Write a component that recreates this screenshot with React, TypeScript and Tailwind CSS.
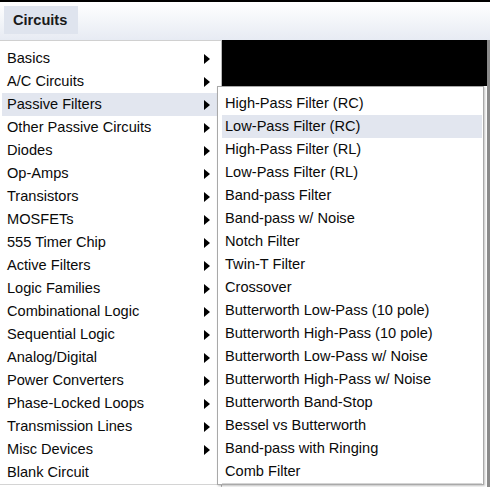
import { ReactNode } from "react";

const mainItems: { label: string; sub: boolean }[] = [
  { label: "Basics", sub: true },
  { label: "A/C Circuits", sub: true },
  { label: "Passive Filters", sub: true },
  { label: "Other Passive Circuits", sub: true },
  { label: "Diodes", sub: true },
  { label: "Op-Amps", sub: true },
  { label: "Transistors", sub: true },
  { label: "MOSFETs", sub: true },
  { label: "555 Timer Chip", sub: true },
  { label: "Active Filters", sub: true },
  { label: "Logic Families", sub: true },
  { label: "Combinational Logic", sub: true },
  { label: "Sequential Logic", sub: true },
  { label: "Analog/Digital", sub: true },
  { label: "Power Converters", sub: true },
  { label: "Phase-Locked Loops", sub: true },
  { label: "Transmission Lines", sub: true },
  { label: "Misc Devices", sub: true },
  { label: "Blank Circuit", sub: false },
];

const filterItems = [
  "High-Pass Filter (RC)",
  "Low-Pass Filter (RC)",
  "High-Pass Filter (RL)",
  "Low-Pass Filter (RL)",
  "Band-pass Filter",
  "Band-pass w/ Noise",
  "Notch Filter",
  "Twin-T Filter",
  "Crossover",
  "Butterworth Low-Pass (10 pole)",
  "Butterworth High-Pass (10 pole)",
  "Butterworth Low-Pass w/ Noise",
  "Butterworth High-Pass w/ Noise",
  "Butterworth Band-Stop",
  "Bessel vs Butterworth",
  "Band-pass with Ringing",
  "Comb Filter",
];

function Arrow() {
  return (
    <svg width="6" height="10" viewBox="0 0 6 10" className="shrink-0">
      <path d="M0 0 L6 5 L0 10 Z" fill="#000" />
    </svg>
  );
}

function Row({ active, children }: { active?: boolean; children: ReactNode }) {
  return (
    <div className={`flex h-[23px] items-center ${active ? "bg-[#e2e6ef]" : ""}`}>
      {children}
    </div>
  );
}

export default function App() {
  return (
    <div
      className="relative h-[487px] w-[490px] overflow-hidden bg-white text-[14.6px] text-[#0a0a0a]"
      style={{ fontFamily: '"Liberation Sans", Arial, sans-serif' }}
    >
      {/* window top edge */}
      <div className="h-[2px] bg-black" />

      {/* menubar */}
      <div className="flex h-[38px] items-start bg-gradient-to-b from-[#ffffff] to-[#e7ebf3] pl-[4px] pt-[4px]">
        <div className="flex h-[28px] w-[74px] items-center bg-[#dfe4ee] pl-[9px] pt-px text-[14.6px] font-bold text-[#1a1a1a]">
          Circuits
        </div>
      </div>

      <div className="flex h-[447px]">
        {/* main dropdown */}
        <div className="flex w-[222px] flex-col border-r border-t border-r-[#b8b8b8] border-t-[#d0d0d0] pt-[6px]">
          <div className="flex flex-col pl-[2px] pr-[3px]">
            {mainItems.map((it) => (
              <Row key={it.label} active={it.label === "Passive Filters"}>
                <span className="flex-1 pl-[5px]">{it.label}</span>
                {it.sub && (
                  <span className="pr-[8px]">
                    <Arrow />
                  </span>
                )}
              </Row>
            ))}
          </div>
          <div className="h-px bg-[#d4d4d4]" />
        </div>

        {/* canvas area */}
        <div className="flex flex-1">
          <div className="flex-1">
            <div className="h-[46px] bg-black" />
          </div>
          <div className="w-[3px] bg-[#8a8a8a]" />
        </div>
      </div>

      {/* submenu */}
      <div className="absolute left-[217px] top-[86px] h-[399px] w-[267px] border border-[#a9a9a9] bg-white pl-[4px] pr-[1px] pt-[5px] shadow-[1px_1px_2px_rgba(0,0,0,0.25)]">
        {filterItems.map((label) => (
          <Row key={label} active={label === "Low-Pass Filter (RC)"}>
            <span className="pl-[3px]">{label}</span>
          </Row>
        ))}
        <div className="h-px bg-[#d4d4d4]" />
      </div>
    </div>
  );
}
